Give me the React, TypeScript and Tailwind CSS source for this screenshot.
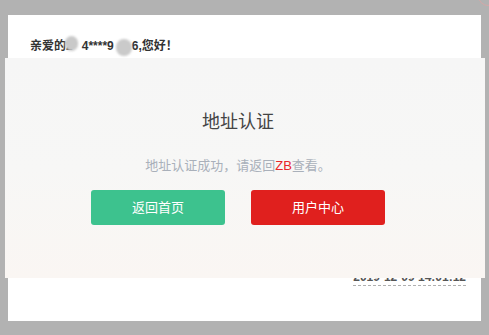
export default function App() {
  return (
    <div
      className="relative h-[335px] w-[489px] overflow-hidden bg-[#b2b2b2] pt-[15px] pl-[8px]"
      style={{ fontFamily: '"Liberation Sans", "Noto Sans CJK SC", sans-serif' }}
    >
      {/* faint red ring in the corner */}
      <div className="absolute -top-[14px] left-[478px] h-[20px] w-[20px] rounded-full border border-[#e8a0a0]/60" />

      {/* mail card */}
      <div className="flex h-[306px] w-[473px] flex-col justify-between bg-white pl-[22px] pr-[15px] pt-[22px] pb-[35px]">
        <p className="flex items-center text-[12px] font-bold text-[#333]">
          亲爱的
          <span className="relative">
            2
            <span className="absolute -left-[1px] -top-[1px] h-[15px] w-[13px] rounded-full bg-[#c9c9c9] blur-[1px]" />
          </span>
          <span className="ml-[9px]">4****9</span>
          <span className="relative w-[18px]">
            <span className="absolute left-[2px] -top-[7px] h-[17px] w-[16px] rounded-full bg-[#cacaca] blur-[1px]" />
          </span>
          6,您好！
        </p>
        <div className="flex justify-end">
          <span className="border-b border-dashed border-[#b0b0b0] text-[12px] font-bold leading-[15px] text-[#555]">
            2019-12-09 14:01:12
          </span>
        </div>
      </div>

      {/* success dialog over the card */}
      <div className="absolute left-[5px] top-[58px] flex h-[220px] w-[480px] flex-col items-center bg-gradient-to-b from-[#f6f6f6] via-[#f7f7f6] to-[#faf6f3] pt-[53px] pr-[14px]">
        <h2 className="text-[18px] leading-[22px] text-[#444]">地址认证</h2>
        <p className="mt-[25px] text-[13px] leading-[16px] text-[#a9b0ba]">
          地址认证成功，请返回<span className="text-[#e8262a]">ZB</span>查看。
        </p>
        <div className="mt-[16px] flex gap-[26px]">
          <button className="h-[35px] w-[134px] rounded-[3px] bg-[#3dc28e] text-[13px] text-white">
            返回首页
          </button>
          <button className="h-[35px] w-[134px] rounded-[3px] bg-[#e0201e] text-[13px] text-white">
            用户中心
          </button>
        </div>
      </div>
    </div>
  );
}
